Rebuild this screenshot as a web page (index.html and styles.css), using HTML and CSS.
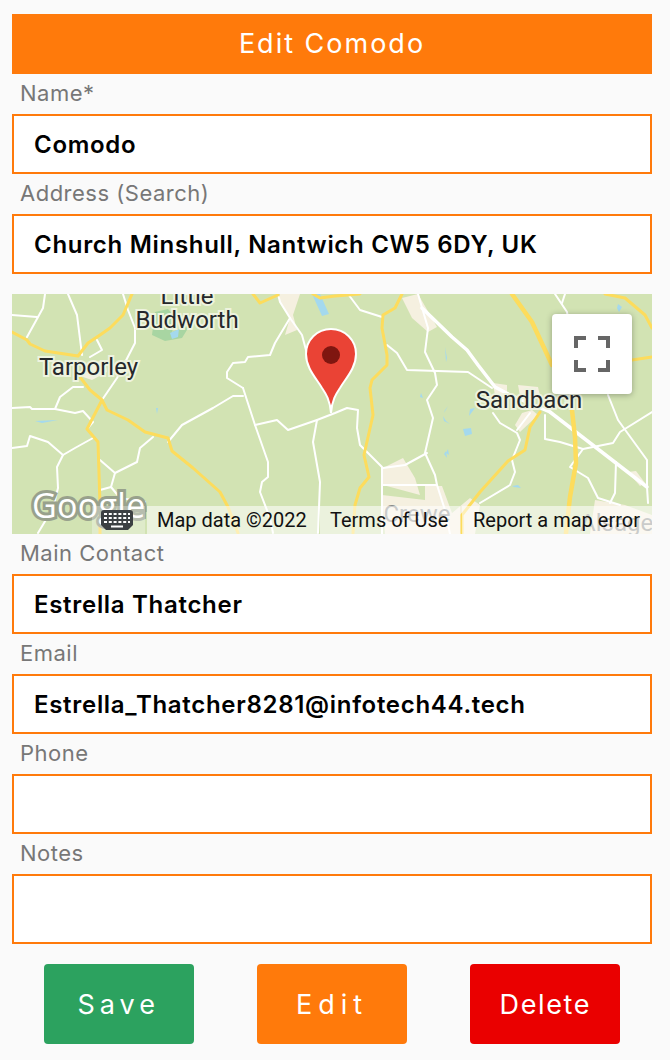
FILE: index.html
```html
<!DOCTYPE html>
<html lang="en">
<head>
<meta charset="utf-8">
<title>Edit Comodo</title>
<link rel="stylesheet" href="styles.css">
</head>
<body>
<main class="page">
  <h1 class="title">Edit Comodo</h1>
  <form class="form">
    <label class="label">Name*</label>
    <div class="field">Comodo</div>
    <label class="label">Address (Search)</label>
    <div class="field">Church Minshull, Nantwich CW5 6DY, UK</div>
    <div class="map">
      <svg class="map-art" viewBox="12 294 640 240" width="640" height="240" xmlns="http://www.w3.org/2000/svg">
        <rect x="12" y="294" width="640" height="240" fill="#d2e3b3"/>
        <g class="urban">
          <path d="M280 294H300L293 315L297 330L285 335L290 318L280 302Z"/>
          <path d="M402 298L418 294L437 327L428 332L412 318Z"/>
          <path d="M493 383L507 385L507 396L495 396Z"/>
          <path d="M518 385L538 387L540 396L520 396Z"/>
          <path d="M522 413L532 410L538 415L520 432L515 425Z"/>
          <path d="M628 472L636 471L645 483L640 486Z"/>
          <path d="M383 468L403 458L415 478L420 495L383 485Z"/>
          <path d="M425 486H442L452 513L470 498L480 505L475 534H385L382 495L425 500Z"/>
          <path d="M595 500L625 505L652 515V534H590Z"/>
          <path d="M107 372L92 380L80 376L85 365L105 360Z"/>
        </g>
        <g class="water">
          <path d="M155 312L168 309L176 318L172 332L190 325L182 338L165 341L152 335Z" class="park"/>
          <path d="M170 333L179 329L178 337L172 339Z"/>
          <path d="M312 294H320L329 314L322 316Z"/>
          <path d="M463 429L471 428L472 434L465 436Z"/>
          <path d="M445 410L448 406L444 413ZM470 409L475 408L469 416Z"/>
          <path d="M512 486L518 485L521 488L514 487Z"/>
          <path d="M447 358L445 347L446 362ZM421 393L420 397L423 398Z"/>
          <path d="M618 304L622 307L619 312L617 308Z"/>
          <path d="M35 421L58 420L42 423Z"/>
          <path d="M156 408L158 408L157 414Z"/>
          <path d="M448 449L446 453L449 455ZM446 451L444 454L447 458Z"/>
          <path d="M443 416L446 421L450 424L444 421Z"/>
        </g>
        <g class="roads">
          <path d="M45 294L43 308L27 337"/>
          <path d="M12 315L37 317"/>
          <path d="M68 294L77 315L82 355"/>
          <path d="M123 294L128 310L135 328L135 343L117 378L102 400"/>
          <path d="M97 340L102 350L90 357"/>
          <path d="M12 408L30 407L32 409L55 409L60 397L73 387L83 387"/>
          <path d="M55 409L75 413L83 411L93 422L87 429"/>
          <path d="M12 448L27 446L30 436L48 442L63 455L75 448L93 438"/>
          <path d="M63 455L57 467L58 488L53 508L38 533"/>
          <path d="M100 460L115 473L137 462L140 448L153 437"/>
          <path d="M115 473L111 487L120 498L145 502"/>
          <path d="M100 490L111 487"/>
          <path d="M168 442L182 425L213 408L233 396L243 396"/>
          <path d="M243 388L255 425L268 462L268 477L262 482L260 492L270 518L273 533"/>
          <path d="M243 388L227 378L227 372L233 363L245 362L248 357L270 355L275 343L290 318L280 302L278 294"/>
          <path d="M290 318L302 335L310 365"/>
          <path d="M255 425L277 420L288 430L317 420L335 413L347 408L358 410L357 428L360 445L382 467L382 495L382 534"/>
          <path d="M317 420L313 442L320 482L318 533"/>
          <path d="M348 294L360 310L382 317"/>
          <path d="M418 294L428 328L425 352L435 373L437 385L427 400L433 418L425 453L435 475L437 485L445 510L450 534"/>
          <path d="M387 345L397 353L407 370L468 372L492 388"/>
          <path d="M493 413L500 423L517 433L520 440L512 460L515 472L510 485L480 503"/>
          <path d="M530 413L517 430"/>
          <path d="M383 468L405 465L427 453"/>
          <path d="M382 485L437 485"/>
          <path d="M545 415L545 439L560 442L583 449L613 443L620 432L652 412"/>
          <path d="M608 395L618 420L647 460L647 487L648 503"/>
          <path d="M583 449L570 467L588 478L598 498L620 505"/>
          <path d="M616 462L615 493L610 503"/>
          <path d="M555 294L567 312L568 318"/>
          <path d="M565 294L562 303"/>
          <path class="wide" d="M422 308L452 337L467 350L478 365L495 387L510 395"/>
          <path class="wide" d="M550 412L647 487"/>
          <path class="wide" d="M510 395L550 412"/>
        </g>
        <g class="highways">
          <path d="M12 332L27 340L30 344L45 351L78 356L88 343L100 335L110 328L123 315L132 294"/>
          <path d="M80 377L90 390L102 400L107 410L128 420L145 432L168 438L172 451L193 468L220 492L228 507L238 533"/>
          <path d="M102 400L87 429L98 442L100 505L100 534"/>
          <path d="M253 294L260 303L278 295"/>
          <path d="M313 294L320 298L335 296L360 294"/>
          <path d="M402 294L395 308L383 315L382 328L387 355L387 365L372 380L370 388L373 415L364 455L369 477L360 488L355 505L353 533"/>
          <path class="wide" d="M512 294L532 322L552 365"/>
          <path class="wide" d="M572 410L575 437L576 463L570 497L566 533"/>
          <path d="M540 412L530 427L525 450L508 461L480 492L462 515L462 533"/>
          <path d="M605 294L625 298L645 315L652 328"/>
          <path d="M632 360L652 357"/>
        </g>
        <g class="place">
          <text x="187" y="304" text-anchor="middle">Little</text>
          <text x="187" y="328" text-anchor="middle">Budworth</text>
          <text x="88.500" y="375" text-anchor="middle">Tarporley</text>
          <text x="529" y="408" text-anchor="middle">Sandbacn</text>
          <text class="faint" x="417" y="522" text-anchor="middle">Crewe</text>
          <text class="faint" x="580" y="531">Alsager</text>
        </g>
        <text class="google" x="32" y="518">Google</text>
        <path class="pin" d="M331 413C330 400 326 394 322 388C316 378 306 368 306 354C306 340 317 329 331 329C345 329 356 340 356 354C356 368 346 378 340 388C336 394 332 400 331 413Z"/>
        <circle class="pin-dot" cx="331" cy="355" r="9"/>
      </svg>
      <button type="button" class="fullscreen" aria-label="Toggle fullscreen view">
        <svg viewBox="0 0 36 36" width="36" height="36" xmlns="http://www.w3.org/2000/svg">
          <path d="M2 12V2H12M24 2H34V12M34 24V34H24M12 34H2V24" fill="none" stroke="#666" stroke-width="4"/>
        </svg>
      </button>
      <div class="attribution">
        <span class="attr-cell attr-keys">
          <svg viewBox="0 0 32 20" width="32" height="20" xmlns="http://www.w3.org/2000/svg">
            <path d="M3 0H29Q32 0 32 3V15L27 20H5L0 15V3Q0 0 3 0Z" fill="#3c4043"/>
            <path d="M3 4H29M3 8H29M3 12H29" stroke="#fff" stroke-width="2" stroke-dasharray="3 1.800"/>
            <path d="M10 16.500H22" stroke="#fff" stroke-width="2"/>
          </svg>
        </span>
        <span class="attr-cell attr-data">Map data ©2022</span>
        <span class="attr-cell attr-terms">Terms of Use</span>
        <span class="attr-cell attr-report">Report a map error</span>
      </div>
    </div>
    <label class="label">Main Contact</label>
    <div class="field">Estrella Thatcher</div>
    <label class="label">Email</label>
    <div class="field">Estrella_Thatcher8281@infotech44.tech</div>
    <label class="label">Phone</label>
    <div class="field"></div>
    <label class="label">Notes</label>
    <div class="field field-notes"></div>
    <div class="actions">
      <button type="button" class="btn btn-save">Save</button>
      <button type="button" class="btn btn-edit">Edit</button>
      <button type="button" class="btn btn-delete">Delete</button>
    </div>
  </form>
</main>
</body>
</html>
```
FILE: styles.css
```css
* { box-sizing: border-box; }
html, body { margin: 0; padding: 0; height: 100%; }
body {
  background: #fafafa;
  font-family: Inter, "Noto Sans", sans-serif;
}
.page { padding: 14px 18px 16px 12px; width: 670px; }
.title {
  margin: 0;
  height: 60px;
  background: #ff7a0b;
  color: #fff;
  font-size: 27px;
  font-weight: 400;
  letter-spacing: 2px;
  line-height: 60px;
  text-align: center;
}
.form { display: flex; flex-direction: column; }
.label {
  display: block;
  height: 40px;
  padding: 6px 0 0 8px;
  color: #777;
  font-size: 22px;
  line-height: 26px;
  letter-spacing: 0.5px;
}
.field {
  height: 60px;
  padding: 1px 20px 0;
  border: 2px solid #ff7a0b;
  background: #fff;
  color: #000;
  font-size: 24px;
  font-weight: 600;
  line-height: 56px;
  letter-spacing: 0.7px;
  white-space: nowrap;
}
.field-notes { height: 70px; }
.map { position: relative; height: 240px; margin-top: 20px; overflow: hidden; }
.map-art { display: block; }
.urban path { fill: #f5f0e0; }
.water path { fill: #a4d9ee; }
.water .park { fill: #a8d5a2; }
.roads path { fill: none; stroke: #fff; stroke-width: 2; stroke-linejoin: round; stroke-linecap: round; }
.roads .wide { stroke-width: 3.500; }
.highways path { fill: none; stroke: #fddc5c; stroke-width: 3; stroke-linejoin: round; stroke-linecap: round; }
.highways .wide { stroke-width: 4.500; }
.place text {
  font-family: Roboto, sans-serif;
  font-size: 24px;
  fill: #26282b;
  stroke: #eef3df;
  stroke-width: 4px;
  paint-order: stroke;
}
.place .faint { fill: #8a8d8a; stroke: none; }
.google {
  font-family: "Open Sans", sans-serif;
  font-size: 34px;
  font-weight: 500;
  fill: #fff;
  stroke: #98a18c;
  stroke-width: 6px;
  paint-order: stroke;
  letter-spacing: 0.3px;
}
.pin { fill: #ea4335; stroke: #fff; stroke-width: 2; }
.pin-dot { fill: #7f1610; }
.fullscreen {
  position: absolute;
  top: 20px;
  left: 540px;
  width: 80px;
  height: 80px;
  padding: 0;
  border: 0;
  border-radius: 4px;
  background: #fff;
  box-shadow: 0 1px 6px rgba(0, 0, 0, 0.3);
  display: flex;
  align-items: center;
  justify-content: center;
}
.attribution {
  position: absolute;
  right: 0;
  bottom: 0;
  left: 80px;
  height: 28px;
  display: flex;
  font-family: Roboto, sans-serif;
  font-size: 20px;
  line-height: 28px;
  color: #111;
}
.attr-cell { background: rgba(255, 255, 255, 0.55); white-space: nowrap; }
.attr-keys { width: 53px; padding-left: 9px; display: flex; align-items: center; background: rgba(255, 255, 255, 0.3); margin-right: 2px; }
.attr-data { width: 171px; padding-left: 10px; margin-right: 2px; }
.attr-terms { width: 140px; padding-left: 10px; margin-right: 2px; }
.attr-report { flex: 1; padding-left: 11px; }
.actions { display: flex; justify-content: space-around; margin-top: 20px; }
.btn {
  width: 150px;
  height: 80px;
  border: 0;
  border-radius: 4px;
  color: #fff;
  font-family: Inter, sans-serif;
  font-size: 27px;
  font-weight: 400;
}
.btn-save { background: #2ca25f; letter-spacing: 5px; }
.btn-edit { background: #ff7a0b; letter-spacing: 6px; }
.btn-delete { background: #ea0000; letter-spacing: 1.600px; }
```
